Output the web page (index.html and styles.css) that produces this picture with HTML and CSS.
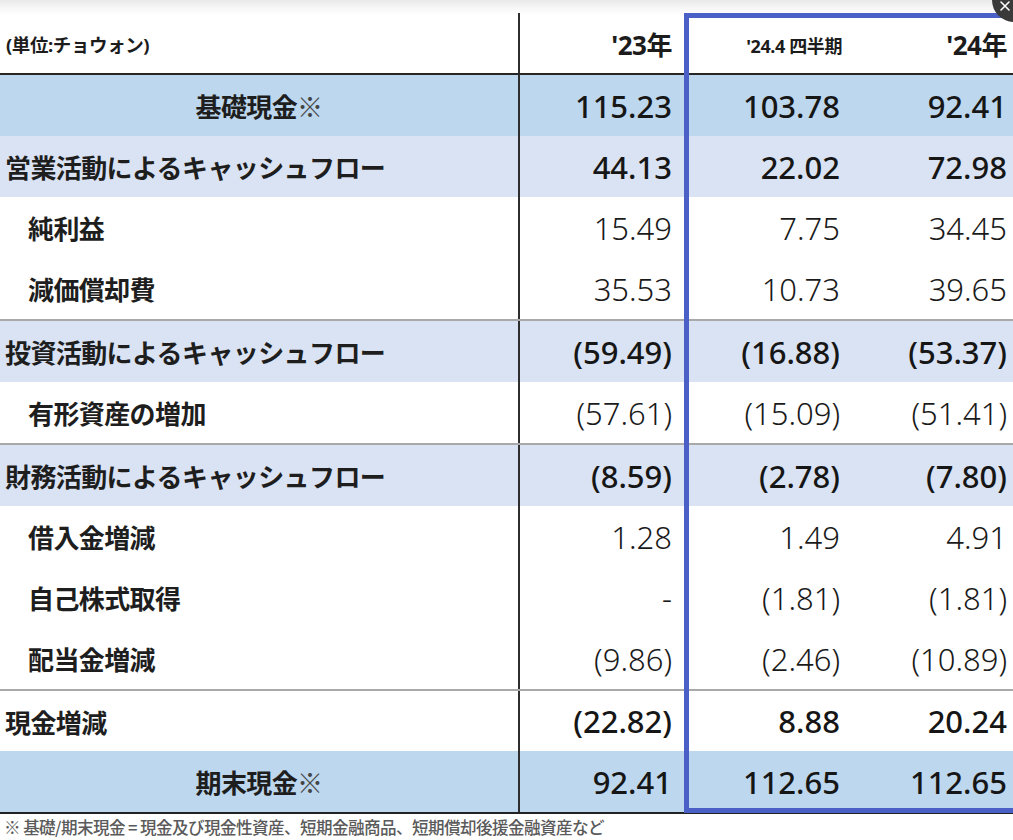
FILE: index.html
```html
<!DOCTYPE html>
<html lang="ja">
<head>
<meta charset="utf-8">
<title>キャッシュフロー</title>
<link rel="stylesheet" href="styles.css">
</head>
<body>
<div class="page">
  <div class="sheet">
    <table class="cf">
      <colgroup>
        <col class="c-label"><col class="c-a"><col class="c-b"><col class="c-c">
      </colgroup>
      <thead>
        <tr>
          <th class="unit">(単位:チョウォン)</th>
          <th class="yr">'23年</th>
          <th class="qt">'24.4 四半期</th>
          <th class="yr">'24年</th>
        </tr>
      </thead>
      <tbody>
        <tr class="total"><td class="lbl center">基礎現金<span class="mark">※</span></td><td>115.23</td><td>103.78</td><td>92.41</td></tr>
        <tr class="section"><td class="lbl">営業活動によるキャッシュフロー</td><td>44.13</td><td>22.02</td><td>72.98</td></tr>
        <tr class="item"><td class="lbl sub">純利益</td><td>15.49</td><td>7.75</td><td>34.45</td></tr>
        <tr class="item sep"><td class="lbl sub">減価償却費</td><td>35.53</td><td>10.73</td><td>39.65</td></tr>
        <tr class="section"><td class="lbl">投資活動によるキャッシュフロー</td><td>(59.49)</td><td>(16.88)</td><td>(53.37)</td></tr>
        <tr class="item sep"><td class="lbl sub">有形資産の増加</td><td>(57.61)</td><td>(15.09)</td><td>(51.41)</td></tr>
        <tr class="section"><td class="lbl">財務活動によるキャッシュフロー</td><td>(8.59)</td><td>(2.78)</td><td>(7.80)</td></tr>
        <tr class="item"><td class="lbl sub">借入金増減</td><td>1.28</td><td>1.49</td><td>4.91</td></tr>
        <tr class="item"><td class="lbl sub">自己株式取得</td><td>-</td><td>(1.81)</td><td>(1.81)</td></tr>
        <tr class="item sep"><td class="lbl sub">配当金増減</td><td>(9.86)</td><td>(2.46)</td><td>(10.89)</td></tr>
        <tr class="plain"><td class="lbl">現金増減</td><td>(22.82)</td><td>8.88</td><td>20.24</td></tr>
        <tr class="total last"><td class="lbl center">期末現金<span class="mark">※</span></td><td>92.41</td><td>112.65</td><td>112.65</td></tr>
      </tbody>
    </table>
    <div class="focus"></div>
  </div>
  <p class="note">※ 基礎/期末現金 = 現金及び現金性資産、短期金融商品、短期償却後援金融資産など</p>
  <div class="close">
    <svg width="44" height="44" viewBox="0 0 44 44"><path d="M9 24 L17 32 M17 24 L9 32" stroke="#fff" stroke-width="1.6" stroke-linecap="round" fill="none"/></svg>
  </div>
</div>
</body>
</html>
```

FILE: styles.css
```css
html, body {
  margin: 0;
  padding: 0;
  background: #fff;
}
body {
  width: 1013px;
  height: 840px;
  overflow: hidden;
  font-family: "Noto Sans", "Noto Sans CJK JP", sans-serif;
  color: #161616;
}
.page {
  position: relative;
  width: 1013px;
  height: 840px;
  overflow: hidden;
  background: linear-gradient(#e9e9e9 0px, #f7f7f7 8px, #ffffff 16px, #ffffff 100%);
}
.sheet {
  position: relative;
  width: 1020px;
  padding-top: 13px;
}
.cf {
  width: 1020px;
  border-collapse: collapse;
  table-layout: fixed;
}
.c-label { width: 519px; }
.c-a { width: 165px; }
.c-b { width: 169px; }
.c-c { width: 167px; }

.cf th {
  height: 56px;
  padding: 0;
  border-bottom: 2px solid #262626;
  font-family: "Noto Sans", "Noto Sans CJK JP", sans-serif;
  font-weight: 700;
  color: #1c1c1c;
  vertical-align: middle;
}
.cf th.unit {
  text-align: left;
  padding-left: 6px;
  font-size: 18.5px;
  letter-spacing: -0.4px;
  padding-top: 2px;
}
.cf th.yr {
  text-align: right;
  padding-right: 13px;
  font-size: 26px;
  letter-spacing: -0.5px;
  padding-top: 2px;
}
.cf th:nth-child(2) {
  padding-right: 12px;
  border-left: 2px solid #2e2e2e;
}
.cf th.qt {
  text-align: right;
  padding-right: 11px;
  font-size: 18px;
  letter-spacing: -0.4px;
  padding-top: 4px;
}

.cf td {
  height: 61px;
  padding: 0 13px 0 0;
  text-align: right;
  font-size: 31px;
  vertical-align: middle;
  white-space: nowrap;
}
.cf td:nth-child(2) {
  padding-right: 12px;
  border-left: 2px solid #2e2e2e;
}
.cf td.lbl {
  text-align: left;
  padding: 0 0 0 5px;
  font-family: "Noto Sans CJK JP", sans-serif;
  font-size: 26px;
  font-weight: 700;
  letter-spacing: -0.6px;
  color: #1e1e1e;
}
.cf td.sub { padding-left: 28px; }
.cf td.center {
  text-align: center;
  padding-left: 0;
}
.mark {
  font-weight: 400;
  color: #444;
}

.total td { background: #bdd7ee; font-weight: 500; }
.section td { background: #dae3f3; font-weight: 500; }
.plain td { font-weight: 500; height: 60px; }
.item td { font-weight: 300; color: #1a1a1a; }
.sep td { border-bottom: 2px solid #a9a9a9; }
.last td { border-bottom: 2px solid #222; }

.focus {
  position: absolute;
  left: 684px;
  top: 13px;
  width: 340px;
  height: 800px;
  box-sizing: border-box;
  border: 5px solid #4a60c6;
  pointer-events: none;
}

.note {
  margin: 3px 0 0 4px;
  font-family: "Noto Sans CJK JP", sans-serif;
  font-size: 16.6px;
  font-weight: 500;
  letter-spacing: -0.6px;
  line-height: 20px;
  color: #5a5a5a;
}

.close {
  position: absolute;
  left: 992px;
  top: -22px;
  width: 44px;
  height: 44px;
  border-radius: 50%;
  background: #3a3a3a;
}
.close svg { display: block; }
```
